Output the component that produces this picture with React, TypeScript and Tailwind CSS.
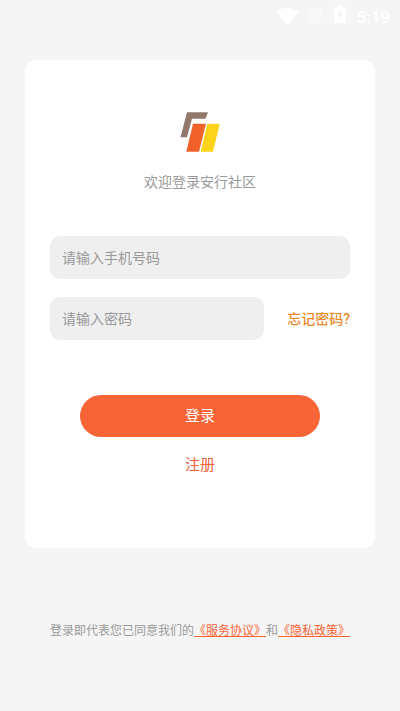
import React from "react";

function StatusBar() {
  return (
    <header className="flex h-8 items-center justify-end pr-[10px] text-white">
      <svg className="mr-[7px] h-[17px] w-[23px]" viewBox="0 0 23 17" fill="currentColor" aria-hidden="true">
        <path d="M0.3 3.8C3.4 1.3 7.2 0 11.5 0s8.100 1.300 11.200 3.800L11.500 17z" />
      </svg>
      <svg className="mr-[11px] h-[17px] w-[17px] opacity-40" viewBox="0 0 17 17" fill="currentColor" aria-hidden="true">
        <path d="M5 0.500h10V13L4 1.500zM1 0.500L0 1.600l2 2.100V16h11.500l1.300 1 1-1z" />
      </svg>
      <svg className="mr-[11px] mb-1 h-[18px] w-3" viewBox="0 0 12 18" fill="currentColor" aria-hidden="true">
        <path fillRule="evenodd" d="M3.500 0h5v2H12v16H0V2h3.500zM8 4.500L2.500 10.500H5.500L3.500 15L9.500 9H6.500z" />
      </svg>
      <time className="mt-[2px] font-[Roboto,sans-serif] text-[17px] leading-6 font-medium">5:19</time>
    </header>
  );
}

function Logo() {
  return (
    <svg className="h-[42px] w-10" viewBox="0 0 40 42" role="img" aria-label="安行社区">
      <path d="M7 1.200H28L25.500 7.800H12L7 26.300H0.500z" fill="#94776b" />
      <path d="M13 12.700H26L19 40.800H6.300z" fill="#f0622a" />
      <path d="M27.300 12.700H39.800L33 40.800H20.600z" fill="#fdd31c" />
    </svg>
  );
}

export default function App() {
  return (
    <div className="min-h-screen bg-[#f5f5f5] pb-[70px] font-[Roboto,'Noto_Sans_CJK_SC',sans-serif]">
      <StatusBar />
      <main className="mx-[25px] mt-7 rounded-xl bg-white px-[25px] pt-[51px] pb-[71px]">
        <div className="flex flex-col items-center">
          <Logo />
          <h1 className="mt-[18px] text-sm leading-[22px] text-[#999999]">欢迎登录安行社区</h1>
        </div>
        <form className="mt-[43px]" onSubmit={(e: React.FormEvent) => e.preventDefault()}>
          <input
            type="tel"
            aria-label="手机号码"
            placeholder="请输入手机号码"
            className="block h-[43px] w-full rounded-[10px] bg-[#efefef] px-3 text-sm text-[#333333] outline-none placeholder:text-[#999999]"
          />
          <div className="mt-[18px] flex items-center justify-between">
            <input
              type="password"
              aria-label="密码"
              placeholder="请输入密码"
              className="mr-[23px] block h-[43px] min-w-0 flex-1 rounded-[10px] bg-[#efefef] px-3 text-sm text-[#333333] outline-none placeholder:text-[#999999]"
            />
            <a href="#forgot" className="shrink-0 text-sm font-medium text-[#e98a2b]">
              忘记密码?
            </a>
          </div>
          <div className="mt-[55px] flex flex-col items-center px-[30px]">
            <button type="submit" className="h-[42px] w-full rounded-[21px] bg-[#f96436] text-[15px] text-white">
              登录
            </button>
            <a href="#register" className="mt-4 text-[15px] leading-6 text-[#ee6139]">
              注册
            </a>
          </div>
        </form>
      </main>
      <footer className="mt-[73px] text-center text-xs leading-5 text-[#999999]">
        登录即代表您已同意我们的
        <a href="#terms" className="text-[#f96436] underline">《服务协议》</a>
        和
        <a href="#privacy" className="text-[#f96436] underline">《隐私政策》</a>
      </footer>
    </div>
  );
}
